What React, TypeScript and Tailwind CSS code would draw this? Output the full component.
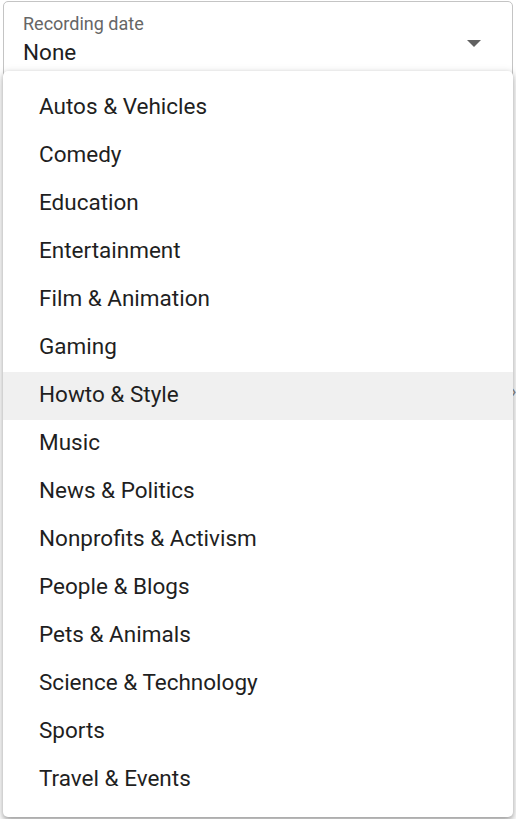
import React from 'react';

const categories = [
  'Autos & Vehicles',
  'Comedy',
  'Education',
  'Entertainment',
  'Film & Animation',
  'Gaming',
  'Howto & Style',
  'Music',
  'News & Politics',
  'Nonprofits & Activism',
  'People & Blogs',
  'Pets & Animals',
  'Science & Technology',
  'Sports',
  'Travel & Events',
];

const App: React.FC = () => {
  const selected = 'Howto & Style';

  return (
    <div className="relative w-[516px] h-[819px] overflow-hidden bg-white font-['Roboto',_'Liberation_Sans',_sans-serif]">
      {/* page behind the menu */}
      <div className="ml-[3px] mt-[1px] w-[510px] h-[110px] rounded-t-[5px] border border-[#c4c4c4] px-[19px] pt-[11px] flex items-start justify-between">
        <div className="flex flex-col">
          <span className="text-[18px] leading-[22px] text-[#666666]">Recording date</span>
          <span className="text-[22.5px] leading-[34px] text-[#1f1f1f]">None</span>
        </div>
        <svg width="14" height="7" viewBox="0 0 14 7" className="mt-[27px] mr-[12px]">
          <path d="M0 0h14L7 7z" fill="#616161" />
        </svg>
      </div>
      <div className="absolute left-[511px] top-[384px] text-[18px] leading-[14px] text-[#8a8a8a]">›</div>

      {/* dropdown menu */}
      <div className="absolute left-[3px] top-[71px] w-[510px] rounded-[5px] bg-white py-[13px] shadow-[0_5px_6px_-3px_rgba(0,0,0,0.2),0_2px_4px_1px_rgba(0,0,0,0.14),0_3px_8px_2px_rgba(0,0,0,0.12)]">
        <ul>
          {categories.map((c) => (
            <li
              key={c}
              className={`h-[48px] flex items-center pl-[36px] pb-[2px] text-[22.5px] text-[#1f1f1f] ${c === selected ? 'bg-[#f0f0f0]' : ''}`}
            >
              {c}
            </li>
          ))}
        </ul>
      </div>
    </div>
  );
};

export default App;
